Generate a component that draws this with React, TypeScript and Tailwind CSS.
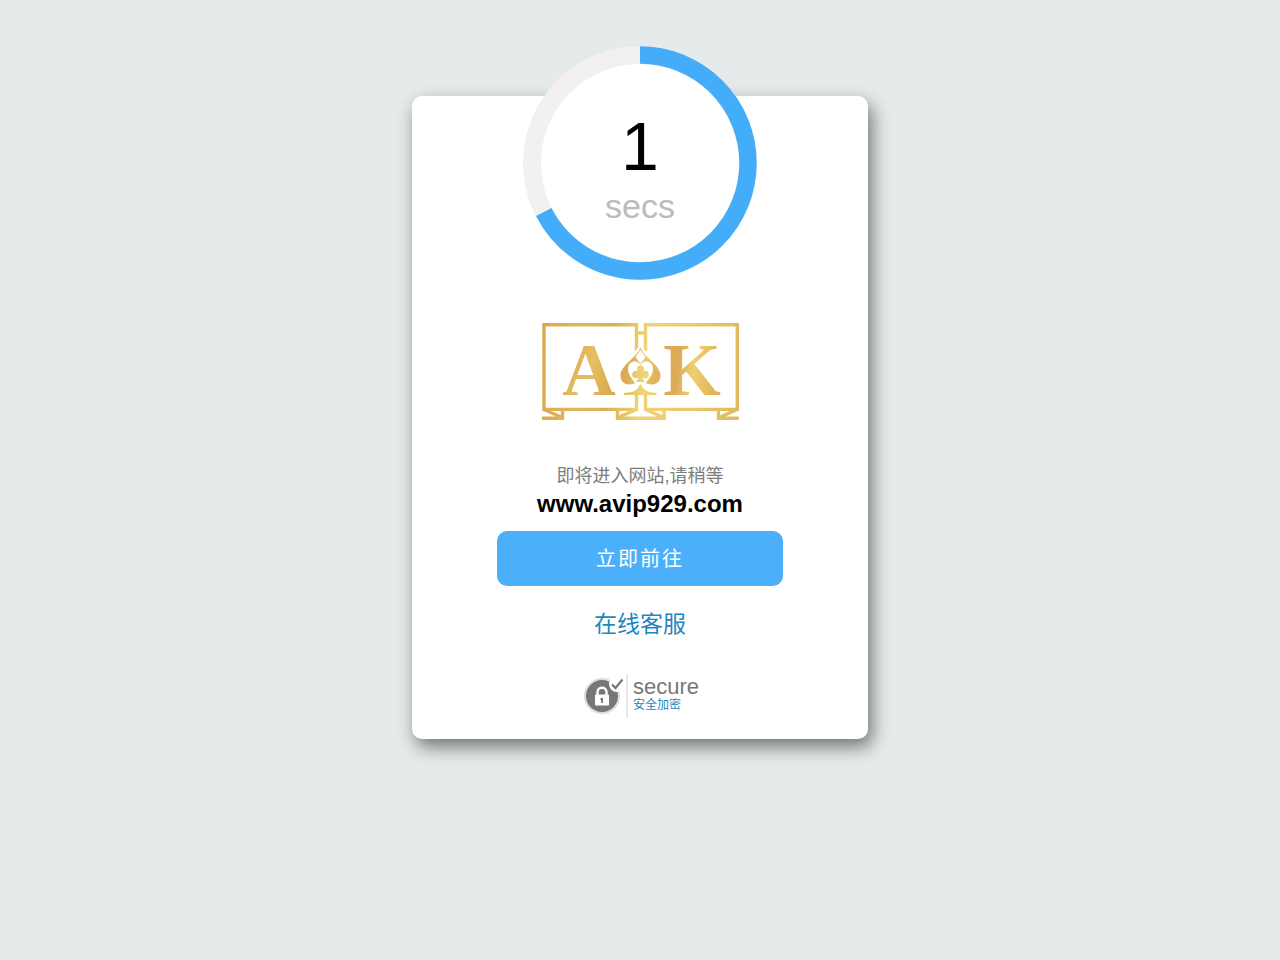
const TOTAL_SECONDS = 3;

type CountdownRingProps = {
  seconds: number;
};

function CountdownRing({ seconds }: CountdownRingProps) {
  return (
    <div className="grid size-[234px] place-items-center -mt-[50px]">
      <svg
        viewBox="0 0 234 234"
        className="size-full [grid-area:1/1]"
        aria-hidden="true"
      >
        <circle cx="117" cy="117" r="108" fill="#fff" stroke="#f2f1f0" strokeWidth="18" />
        <circle
          cx="117"
          cy="117"
          r="108"
          fill="none"
          stroke="#44adf9"
          strokeWidth="17.4"
          pathLength={360}
          strokeDasharray={`${((TOTAL_SECONDS - seconds) / TOTAL_SECONDS) * 360 + 3} 360`}
          transform="rotate(-90 117 117)"
        />
      </svg>
      <div className="[grid-area:1/1] flex flex-col items-center pt-[14px]">
        <span className="text-[68px] leading-[72px] text-black">{seconds}</span>
        <span className="text-[34px] leading-[48px] text-[#bbb]">secs</span>
      </div>
    </div>
  );
}

function Logo() {
  return (
    <svg
      viewBox="0 0 200 102"
      className="mt-10 w-[200px] h-[102px]"
      role="img"
      aria-label="AK"
    >
      <defs>
        <linearGradient id="frame" gradientUnits="userSpaceOnUse" x1="0" y1="40" x2="200" y2="60">
          <stop offset="0" stopColor="#d9a850" />
          <stop offset="0.2" stopColor="#e2b85c" />
          <stop offset="0.35" stopColor="#dcae55" />
          <stop offset="0.52" stopColor="#efd473" />
          <stop offset="0.8" stopColor="#e8c767" />
          <stop offset="1" stopColor="#dfba5e" />
        </linearGradient>
        <linearGradient id="letterA" x1="0" y1="0" x2="1" y2="0.6">
          <stop offset="0" stopColor="#d8a44f" />
          <stop offset="0.6" stopColor="#e6be62" />
          <stop offset="1" stopColor="#dba951" />
        </linearGradient>
        <linearGradient id="letterK" x1="0" y1="0" x2="1" y2="0.2">
          <stop offset="0" stopColor="#d9a651" />
          <stop offset="0.35" stopColor="#deac57" />
          <stop offset="0.6" stopColor="#efcf70" />
          <stop offset="1" stopColor="#dfb358" />
        </linearGradient>
      </defs>

      {/* the two panels and their feet */}
      <g fill="none" stroke="url(#frame)" strokeWidth="3.4">
        <path d="M96.5 31V4.7H4V89.4H96.5V74" />
        <path d="M105.5 31V4.7H197.3V89.4H105.5V74" />
        <path d="M96.5 13H105.5" />
        <path d="M2 98.3H22.5V90M4 89.5L22 97.5" />
        <path d="M77.5 90V98.3H124V90M96.5 89.5L78 97.5M105.5 89.5L123.5 97.5" />
        <path d="M198.8 98.3H178.5V90M197 89.5L179 97.5" />
      </g>

      <g
        fontFamily="'Liberation Serif', serif"
        fontWeight="700"
        fontSize="74"
        textAnchor="middle"
      >
        <text x="49" y="75" fill="url(#letterA)">A</text>
        <text x="152" y="75" fill="url(#letterK)">K</text>
      </g>

      {/* spade with a diamond, heart and club inside */}
      <path
        d="M100.5 23C104 34 123 43 123 56C123 65 115 69 108 66L110 71V74H91V71L93 66C86 69 78 65 78 56C78 43 97 34 100.5 23Z"
        fill="#fff"
      />
      <g fill="url(#letterK)">
        <path d="M100.5 27C104 38 120.5 45 120.5 55.5C120.5 61 117 64.5 112 64.5C108 64.5 105 63 103 60.5H98C96 63 93 64.5 89 64.5C84 64.5 80.5 61 80.5 55.5C80.5 45 97 38 100.5 27Z" />
      </g>
      <path d="M100.5 30L105.5 37L100.5 43.5L95.5 37Z" fill="#fff" />
      <path
        d="M100.5 45C103 39.5 113 40 113 49C113 54.5 109 59 104 65H97C92 59 88 54.5 88 49C88 40 98 39.5 100.5 45Z"
        fill="#fff"
      />
      <g fill="url(#frame)">
        <circle cx="100.5" cy="49" r="3.4" />
        <circle cx="96" cy="54.5" r="3.8" />
        <circle cx="105" cy="54.5" r="3.8" />
        <path d="M99.5 49H101.5L102.5 58L105 62H96L98.5 58Z" />
        <path d="M100.5 64L104 69C107 72 111 72.5 116.5 73V75H84V73C90 72.5 94 72 97 69Z" />
      </g>
    </svg>
  );
}

function SecureBadge() {
  return (
    <div className="mt-[34px] flex h-11 items-center pl-[3px]">
      <svg viewBox="0 0 42 44" className="h-11 w-[42px]" aria-hidden="true">
        <circle cx="18" cy="22" r="18" fill="#ddd" />
        <circle cx="18" cy="22" r="16" fill="#777" />
        <path
          d="M13.5 21V18C13.5 12.4 22.5 12.4 22.5 18V21"
          fill="none"
          stroke="#fff"
          strokeWidth="2.4"
        />
        <rect x="11" y="20.5" width="14" height="11" rx="0.8" fill="#fff" />
        <path d="M16.5 24H19V29H17.2V26H16.5Z" fill="#777" />
        <circle cx="33" cy="10" r="8" fill="#fff" />
        <path d="M28 10.5L31.5 14L38.5 5.5" fill="none" stroke="#777" strokeWidth="2.2" />
      </svg>
      <div className="flex h-11 flex-col border-l-2 border-[#e8e8e8] pt-px pl-[5px]">
        <span className="text-[22px] leading-6 text-[#777]">secure</span>
        <span className="text-xs leading-3 text-[#1d87bf]">安全加密</span>
      </div>
    </div>
  );
}

export default function App() {
  return (
    <div className="flex min-h-screen items-start justify-center bg-[#e5eaeb] px-4 py-24 font-['Liberation_Sans','Noto_Sans_CJK_SC',sans-serif]">
      <main className="flex w-full max-w-[456px] flex-col items-center rounded-[10px] bg-white px-6 pb-[21px] shadow-[4px_8px_18px_rgba(0,0,0,0.5)]">
        <CountdownRing seconds={1} />
        <Logo />
        <p className="mt-[42px] text-lg leading-6 text-[#7d7d7d]">即将进入网站,请稍等</p>
        <h1 className="mt-0.5 text-2xl leading-7 font-bold text-black">www.avip929.com</h1>
        <button
          type="button"
          className="mt-[13px] h-[55px] w-full max-w-[286px] cursor-pointer rounded-[10px] bg-[#4bb0f9] text-xl tracking-[2px] text-white"
        >
          立即前往
        </button>
        <a href="#service" className="mt-[22px] text-[23px] leading-8 text-[#1d87bf]">
          在线客服
        </a>
        <SecureBadge />
      </main>
    </div>
  );
}
